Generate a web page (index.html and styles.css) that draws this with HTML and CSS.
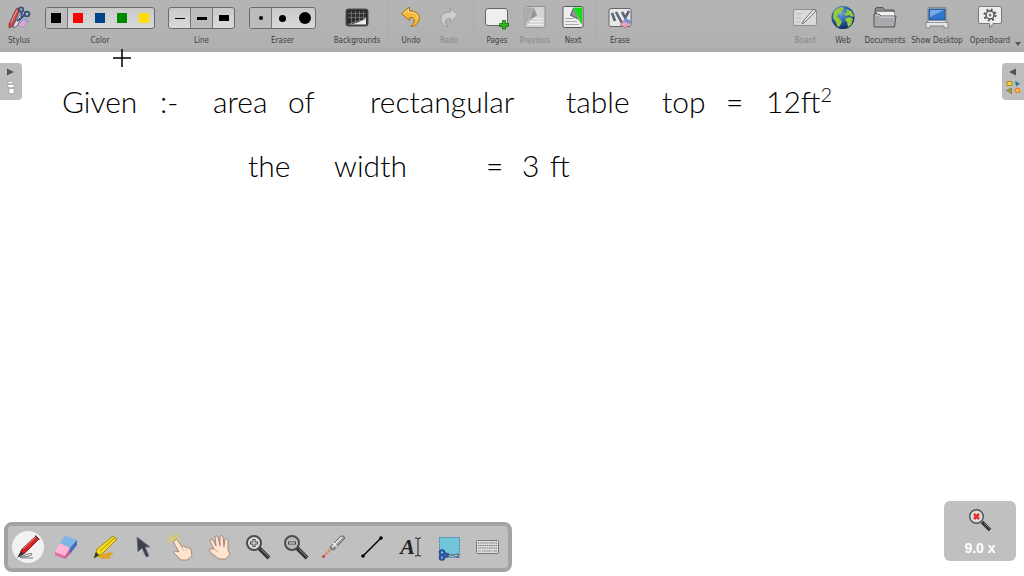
FILE: index.html
```html
<!DOCTYPE html>
<html lang="en">
<head>
<meta charset="utf-8">
<title>OpenBoard</title>
<link rel="stylesheet" href="styles.css">
</head>
<body>
<header class="toolbar">
	<button class="tool stylus">
		<svg width="24" height="24" viewBox="0 0 24 24"><path d="M2 18 9 3q2-2 4 0L6 20l-4 2z" fill="#c94848" stroke="#733" stroke-width=".7"/><path d="m4 17 6-13" stroke="#eaa"/><path d="M7 18 15 5l3 1-8 14-4 2z" fill="#dde" stroke="#556" stroke-width=".8"/><g fill="none" stroke="#365080" stroke-width="1.8"><circle cx="14" cy="3.500" r="2.200"/><circle cx="20" cy="8" r="2.400"/><path d="m15 6-1 7M18 9l-8 6"/></g><path d="m11 19 6-6 5 2-6 7z" fill="#dba5d6" stroke="#87a" stroke-width=".5"/><path d="m16 14 2-2 4 2-2 3z" fill="#91a7dc"/></svg>
		<span>Stylus</span>
	</button>
	<div class="group colors">
		<div class="choices">
			<button class="on" aria-label="Black"><i class="swatch black"></i></button>
			<button aria-label="Red"><i class="swatch red"></i></button>
			<button aria-label="Blue"><i class="swatch blue"></i></button>
			<button aria-label="Green"><i class="swatch green"></i></button>
			<button aria-label="Yellow"><i class="swatch yellow"></i></button>
		</div>
		<span>Color</span>
	</div>
	<div class="group lines">
		<div class="choices">
			<button aria-label="Thin line"><i class="line thin"></i></button>
			<button class="on" aria-label="Medium line"><i class="line medium"></i></button>
			<button aria-label="Thick line"><i class="line thick"></i></button>
		</div>
		<span>Line</span>
	</div>
	<div class="group erasers">
		<div class="choices">
			<button class="on" aria-label="Small eraser"><i class="dot small"></i></button>
			<button aria-label="Medium eraser"><i class="dot mid"></i></button>
			<button aria-label="Large eraser"><i class="dot large"></i></button>
		</div>
		<span>Eraser</span>
	</div>
	<button class="tool backgrounds">
		<svg width="24" height="24" viewBox="0 0 24 24"><rect x="1" y="3" width="22" height="17" rx="2" fill="#2c2c2c" stroke="#555"/><path d="M3 7.500h18M3 11.500h18M6.500 5v13M10.500 5v13M14.500 5v13M18.500 5v13" stroke="#777" stroke-width=".8"/><path d="M3 18.500q12-1 18-7v7z" fill="#eee"/><path d="M3 18.500q9-4 18-5" stroke="#999" fill="none" stroke-width=".7"/></svg>
		<span>Backgrounds</span>
	</button>
	<button class="tool sep">
		<svg width="24" height="24" viewBox="0 0 24 24"><path d="M2.500 7.500 10.500 1v4c7-.5 11 4 9.500 9-1 3.500-4 6.500-8.500 6.500 3.500-2.500 4.500-5 3.500-7-.8-1.800-2.300-2.200-4.500-2v3z" fill="#f9b936" stroke="#a87418" stroke-linejoin="round"/><path d="m4.500 7.500 5-4v3c6-.5 9.500 2 9 6" fill="none" stroke="#ffe09a"/></svg>
		<span>Undo</span>
	</button>
	<button class="tool" disabled>
		<svg width="24" height="24" viewBox="0 0 24 24"><path d="M21 9 13.500 2v4C7 5.500 3 9 4 14.500c.7 3.500 3.500 6 7 6-2.500-2-3.500-4.500-2.500-6 .8-1.500 2.500-2 5-1.800V16z" fill="#d4d4d4" stroke="#929292" stroke-width=".9" stroke-linejoin="round"/></svg>
		<span>Redo</span>
	</button>
	<button class="tool sep pages">
		<svg width="24" height="24" viewBox="0 0 24 24"><rect x=".5" y="2.500" width="22" height="17" rx="2.500" fill="#eee" stroke="#666"/><path d="M17.500 14.500h3v3h3v3h-3V23h-3v-2.500h-3v-3h3z" fill="#32b51e" stroke="#126b08" stroke-width=".8"/></svg>
		<span>Pages</span>
	</button>
	<button class="tool" disabled>
		<svg width="24" height="24" viewBox="0 0 24 24"><rect x="2" y=".5" width="20" height="21" rx="1.500" fill="#dedede" stroke="#888"/><path d="M3 1.500h8L3 19z" fill="#aaa"/><path d="m11 1.500 3 8-7 4-3 6z" fill="#909090"/><path d="M10 12.500h10M7 15.500h13M5 18.500h15" stroke="#fff"/></svg>
		<span>Previous</span>
	</button>
	<button class="tool">
		<svg width="24" height="24" viewBox="0 0 24 24"><rect x="2" y=".5" width="20" height="21" rx="1.500" fill="#eee" stroke="#555"/><path d="M12 1.500h9V19z" fill="#13dd18"/><path d="m12 1.500-3 8 8 4 3 5z" fill="#666"/><path d="m12 3-1 6 5 3z" fill="#999"/><path d="M4 12.500h9M4 15.500h12M4 18.500h14" stroke="#aaa"/></svg>
		<span>Next</span>
	</button>
	<button class="tool sep">
		<svg width="24" height="24" viewBox="0 0 24 24"><rect x="1" y="2.500" width="22" height="18" rx="2" fill="#e8e8e8" stroke="#666"/><path d="m4 7 3 8M8 6l6 11M14 6l4 7M21 5l-4 7" stroke="#5c6578" stroke-width="2.600"/><path d="m12 19 5-6 6 3-5 6z" fill="#e7a0be" stroke="#8f7286" stroke-width=".6"/><path d="m15.500 15 2-3 6 3-2 3z" fill="#7892d5"/></svg>
		<span>Erase</span>
	</button>

	<button class="tool push" disabled>
		<svg width="24" height="24" viewBox="0 0 24 24"><rect x=".5" y="3.500" width="23" height="16" rx="1.500" fill="#e4e4e4" stroke="#888"/><path d="M3 8h6M3 12h5M3 16h5" stroke="#bbb"/><path d="m9 18 2-4L21 3l2 2-11 11z" fill="#f5f5f5" stroke="#555" stroke-width=".9"/></svg>
		<span>Board</span>
	</button>
	<button class="tool">
		<svg width="24" height="24" viewBox="0 0 24 24"><defs><radialGradient id="sea" cx=".4" cy=".3" r=".7"><stop offset="0" stop-color="#6ca7e8"/><stop offset=".6" stop-color="#2458a2"/><stop offset="1" stop-color="#122d5f"/></radialGradient></defs><circle cx="12" cy="11.500" r="11.500" fill="url(#sea)"/><path d="M3 5q4-4 9-4l1 2-3 2 1 2-4 1-1 3 3 2 2 3-3 5-2-1-1-4-3-4zM15 3l5 2 3 5-2 1-3-2-3 1-2-2 3-2zM15 12l4-1 3 2-2 6-3 2-1-5-2-2z" fill="#95c83b"/></svg>
		<span>Web</span>
	</button>
	<button class="tool documents">
		<svg width="24" height="24" viewBox="0 0 24 24"><path d="M2 20V3l2-1.500h6l2 2.500h9v4" fill="#888" stroke="#555"/><path d="M4 6h17v11H4z" fill="#f2f2f2"/><path d="M1 8h5l2 2h15l-1.500 11H1z" fill="#a8a8ad" stroke="#55555c"/><path d="M2 9h3.500l2 2H21" stroke="#ddd" fill="none"/></svg>
		<span>Documents</span>
	</button>
	<button class="tool desktop">
		<svg width="24" height="24" viewBox="0 0 24 24"><path d="M3 1.500h18v15h2v5.500h-4v-2H5v2H1v-5.500h2z" fill="#e5e5e5" stroke="#777" stroke-width=".8"/><rect x="4" y="3" width="16" height="11" fill="#3176cc" stroke="#244979"/><path d="M5 4h14L5 11z" fill="#73ace9"/><path d="M3 16.500h18" stroke="#999"/></svg>
		<span>Show Desktop</span>
	</button>
	<button class="tool openboard">
		<svg width="24" height="24" viewBox="0 0 24 24"><path d="M2 .5h20q1.500 0 1.500 1.500v14q0 1.500-1.500 1.500h-7L11.500 22v-4.500H2Q.5 17.500.5 16V2Q.5.5 2 .5z" fill="#eee" stroke="#666" stroke-width=".8"/><circle cx="12" cy="9" r="4" fill="none" stroke="#555" stroke-width="1.500"/><circle cx="12" cy="9" r="5.500" fill="none" stroke="#555" stroke-width="2" stroke-dasharray="2 2.320"/><circle cx="12" cy="9" r="1.500" fill="#777"/></svg>
		<span>OpenBoard</span>
	</button>
	<button class="more" aria-label="More"></button>
</header>

<main class="board">
	<!-- notes written on the page -->
	<p class="note row1">
		<span class="w1">Given</span> <span class="w2">:-</span> <span class="w3">area</span> <span class="w4">of</span>
		<span class="w5">rectangular</span> <span class="w6">table</span> <span class="w7">top</span> <span class="w8">=</span>
		<span class="w9">12ft<sup>2</sup></span>
	</p>
	<p class="note row2">
		<span class="v1">the</span> <span class="v2">width</span> <span class="v3">=</span> <span class="v4">3</span> <span class="v5">ft</span>
	</p>

	<svg class="cross" width="18" height="18" viewBox="0 0 18 18"><path d="M0 9h18M9 0v18" stroke="#000" stroke-width="1.500"/></svg>

	<button class="tab left" aria-label="Page list">
		<svg width="22" height="37" viewBox="0 0 22 37"><path d="M7 5.500 14 9l-7 3.500z" fill="#555"/><path d="M8 18.500h5v2H8zM8 21.500h6v3H8zM9 25.500h5v5H9z" fill="#fff" stroke="#999" stroke-width=".6"/></svg>
	</button>
	<button class="tab right" aria-label="Library">
		<svg width="22" height="37" viewBox="0 0 22 37"><path d="M14 5.500 7 9l7 3.500z" fill="#555"/><path d="M5 18.500h5v4H5z" fill="#f5d548" stroke="#b18b16"/><path d="m13 18 5 2.500-4 3z" fill="#28799c"/><path d="m9.500 25-5 2.500 5 3z" fill="#9ba13a" stroke="#6b6f22" stroke-width=".6"/><circle cx="15.500" cy="27.500" r="2" fill="#ffd28a" stroke="#f28220" stroke-width="1.500"/></svg>
	</button>
</main>

<nav class="palette">
	<button class="on" aria-label="Pen">
		<svg width="32" height="32" viewBox="0 0 32 32"><path d="M8 26q12-5 12-3t-9 3 10 1" fill="none" stroke="#777"/><path d="M7 25 10 18 24 5l3 3-14 14z" fill="#d32222" stroke="#7c1111" stroke-width=".8"/><path d="m11 18 13-12" stroke="#f18b8b"/><path d="m5 27 4-7 3 3z" fill="#333"/><path d="M23 4.500l4.500 4" stroke="#333"/></svg>
	</button>
	<button aria-label="Eraser">
		<svg width="32" height="32" viewBox="0 0 32 32"><path d="m5 21 5-9 10 5-5 9z" fill="#ffb6d5"/><path d="m10 12 4-6q1-1 2-1l11 4-7 8z" fill="#80b5e9"/><path d="m20 17 7-8v5l-7 9z" fill="#416ec3"/><path d="M5 21v3l10 4v-3z" fill="#df6fa3"/><path d="m15 25 5-8v6l-5 5z" fill="#bf6298"/></svg>
	</button>
	<button aria-label="Highlighter">
		<svg width="32" height="32" viewBox="0 0 32 32"><path d="m8 25 13-4 4 2-5 2 3 2-10 1z" fill="#e1a420"/><path d="m5 27 3-9L24 5l4 3-15 15z" fill="#f7db16" stroke="#8b7810" stroke-width=".8"/><path d="m5 27 2-6 3 3z" fill="#333"/><path d="M11 20 26 6.500" stroke="#a58e00"/></svg>
	</button>
	<button aria-label="Select">
		<svg width="32" height="32" viewBox="0 0 32 32"><path d="m10 6 1 15 4-4 4 9 3-1-4-9h5z" fill="#3c404d" stroke="#6c7180" stroke-width=".8"/></svg>
	</button>
	<button aria-label="Interact">
		<svg width="32" height="32" viewBox="0 0 32 32"><path d="M3 6l7 3M8 2v7M13 3l-4 6M2 11l6-2M16 7l-7 3" stroke="#e5d72e"/><path d="M10 9q2-1 3 1l4 6q2-2 3 0 2-1 3 1 3-1 3 2l1 6-5 4h-6l-7-7q-1-3 2-2l3 1-5-9q-1-2 1-3z" fill="#ffe5cf" stroke="#9b7965" stroke-width=".8"/><path d="m17 16 2 4M20 16l2 4" stroke="#c5a18c" stroke-width=".7"/></svg>
	</button>
	<button aria-label="Scroll page">
		<svg width="32" height="32" viewBox="0 0 32 32"><path d="M11 18 7 10q0-3 3-1l3 6-1-9q1-2 3 0l2 8V5q2-2 3 1l1 9 1-7q2-2 3 1v10l2 4-4 5h-7l-9-7q-2-4 1-3z" fill="#ffe5cf" stroke="#967765" stroke-width=".8"/><path d="m11 18 4 3M17 14v2M21 15v2" stroke="#b38e79" stroke-width=".7"/></svg>
	</button>
	<button aria-label="Zoom in">
		<svg width="32" height="32" viewBox="0 0 32 32"><path d="m17 17 10 10" stroke="#333" stroke-width="4"/><path d="m19 18 8 8" stroke="#888"/><circle cx="12" cy="12" r="7" fill="#ddd" stroke="#4c4c4c" stroke-width="2"/><path d="M8 12h8M12 8v8" stroke="#444" stroke-width="3"/><path d="M9 12h6M12 9v6" stroke="#fff"/></svg>
	</button>
	<button aria-label="Zoom out">
		<svg width="32" height="32" viewBox="0 0 32 32"><path d="m17 17 10 10" stroke="#333" stroke-width="4"/><path d="m19 18 8 8" stroke="#888"/><circle cx="12" cy="12" r="7" fill="#bbb" stroke="#4c4c4c" stroke-width="2"/><path d="M8 12h8" stroke="#444" stroke-width="3"/><path d="M9 12h6" stroke="#fff"/></svg>
	</button>
	<button aria-label="Laser pointer">
		<svg width="32" height="32" viewBox="0 0 32 32"><path d="M5 26 16 15" stroke="#df8778" stroke-width="2"/><circle cx="5.500" cy="25.500" r="1.500" fill="#d3473f"/><path d="m12 16 11-11q3-1 4 2L16 19q-3 0-4-3z" fill="#999" stroke="#555" stroke-width=".8"/><path d="m14 16 10-10M15 12l4 4" stroke="#eee" stroke-width="1.500"/></svg>
	</button>
	<button aria-label="Draw lines">
		<svg width="32" height="32" viewBox="0 0 32 32"><path d="M7 25 25 7" stroke="#000" stroke-width="1.500"/><circle cx="7" cy="25" r="1.800"/><circle cx="25" cy="7" r="1.800"/></svg>
	</button>
	<button class="text" aria-label="Write text">
		<b>A</b><svg width="6" height="20" viewBox="0 0 6 20"><path d="M0 1h2l1 1 1-1h2M3 2v16M0 19h2l1-1 1 1h2" fill="none" stroke="#222"/></svg>
	</button>
	<button aria-label="Capture">
		<svg width="32" height="32" viewBox="0 0 32 32"><rect x="6.500" y="6.500" width="20" height="20" fill="#73c6da" stroke="#4d82b5" stroke-dasharray="2 1"/><path d="m12 22 13 4v-3l-13 3" fill="#ddd" stroke="#5a6470" stroke-width="1.200"/><g fill="none" stroke="#264f9c" stroke-width="2"><circle cx="9" cy="21.500" r="2.300"/><circle cx="9" cy="26.500" r="2.300"/><path d="m11 22 5 2M11 26l5-2"/></g></svg>
	</button>
	<button aria-label="Virtual keyboard">
		<svg width="32" height="32" viewBox="0 0 32 32"><rect x="5.500" y="9.500" width="22" height="13" rx="1" fill="#ddd" stroke="#777"/><path d="M7 12h19M7 14.500h19M7 17h19" stroke="#777" stroke-dasharray="1.500 .7"/><path d="M7 20h3M11 20h10M22 20h4" stroke="#999"/></svg>
	</button>
</nav>

<div class="zoom">
	<svg width="24" height="24" viewBox="0 0 24 24"><path d="m14 14 8 8" stroke="#333" stroke-width="3.500"/><path d="m16 15 6 6" stroke="#888" stroke-width=".8"/><circle cx="8.500" cy="8.500" r="6.800" fill="#ddd" stroke="#455960" stroke-width="1.500"/><path d="m6 6 5 5M11 6l-5 5" stroke="#e3302d" stroke-width="2.500"/></svg>
	<span>9.0 x</span>
</div>
</body>
</html>
```
FILE: styles.css
```css
*{margin:0; padding:0; box-sizing:border-box;}
body{min-height:100vh; background:#fff; font-family:"DejaVu Sans Condensed","DejaVu Sans",sans-serif; display:flex; flex-direction:column; overflow:hidden;}
button{border:0; background:none; font:inherit; color:inherit;}
svg{display:block;}

.toolbar{display:flex; align-items:flex-start; height:52px; padding-top:6px; background:linear-gradient(#b4b4b4,#b1b1b1 90%,#a9a9a9); color:#404040; font-size:8px; line-height:12px; white-space:nowrap;}
.tool{width:38px; flex:none; display:flex; flex-direction:column; align-items:center; gap:5px;}
.tool:disabled{color:#868686;}
.tool:disabled svg{opacity:.8;}
.backgrounds{width:66px; margin-left:8px;}
.sep{margin-left:9px; position:relative;}
.sep:before{content:""; position:absolute; left:-5px; top:-6px; width:1px; height:50px; background:#adadad;}
.backgrounds + .sep{margin-left:2px;}
.pages{margin-left:10px;}
.push{margin-left:auto;}
.documents{width:46px;}
.desktop{width:58px;}
.openboard{width:48px;}
.more{align-self:flex-end; margin:0 3px 6px 1px; border:3px solid transparent; border-top:4px solid #555; border-bottom:0;}

.group{flex:none; margin-left:14px; padding-top:1px; text-align:center;}
.colors{width:110px; margin-left:7px;}
.lines{width:67px; margin-left:13px;}
.erasers{width:67px;}
.group > span{display:block; margin-top:6px;}
.choices{display:flex; height:22px; border:1px solid #6b6b6b; border-radius:3px; background:linear-gradient(#c9c9c9,#dadada); overflow:hidden;}
.choices button{flex:1; display:flex; align-items:center; justify-content:center;}
.choices button + button{border-left:1px solid transparent;}
.choices .on{background:#bcbcbc;}
.choices .on + button, .lines button.on{border-left-color:#777;}
.swatch{width:10px; height:10px;}
.black{background:#000;}
.red{background:#f00;}
.blue{background:#00428a;}
.green{background:#008a00;}
.yellow{background:#ffe000;}
.line{width:10px; background:#000;}
.thin{height:1px;}
.medium{height:3px;}
.thick{height:6px;}
.dot{border-radius:50%; background:#000;}
.small{width:4px; height:4px;}
.mid{width:7px; height:7px;}
.large{width:12px; height:12px;}

.board{flex:1; position:relative;}
.note{position:absolute; left:0; color:#000; font:300 30px/36px Lato,sans-serif; white-space:nowrap;}
.note span{position:absolute; top:0;}
.note sup{font-size:20px; line-height:0;}
.row1{top:31px;}
.row2{top:95px;}
.w1{left:62px;}
.w2{left:160px;}
.w3{left:213px;}
.w4{left:288px;}
.w5{left:370px;}
.w6{left:566px;}
.w7{left:662px;}
.w8{left:726px;}
.w9{left:766px;}
.v1{left:248px;}
.v2{left:334px;}
.v3{left:486px;}
.v4{left:522px;}
.v5{left:550px;}
.cross{position:absolute; left:113px; top:-3px;}

.tab{position:absolute; top:11px; width:22px; height:37px; background:#bdbdbd;}
.left{left:0; border-radius:0 4px 4px 0;}
.right{right:0; border-radius:4px 0 0 4px;}

.palette{position:absolute; left:4px; bottom:4px; width:508px; height:50px; padding:0 5px 0 4px; display:flex; align-items:center; justify-content:space-between; border:4px solid #a3a3a3; border-radius:8px; background:#c0c0c0;}
.palette button{width:32px; height:32px; border-radius:50%;}
.palette .on{background:#f2f2f2;}
.palette .text{display:flex; align-items:center; justify-content:center; font:italic 22px "Liberation Serif",serif; color:#222;}

.zoom{position:absolute; right:8px; bottom:15px; width:72px; height:60px; padding-top:7px; display:flex; flex-direction:column; align-items:center; gap:8px; border-radius:6px; background:#c0c0c0; color:#fff; font:bold 14px/16px "Liberation Sans",sans-serif;}
```
